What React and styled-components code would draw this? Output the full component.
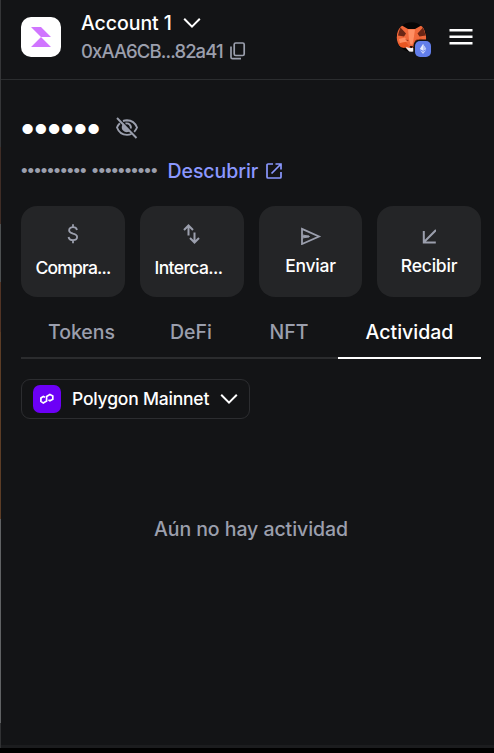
import React from "react";
import styled, { createGlobalStyle } from "styled-components";

const Global = createGlobalStyle`
  * { box-sizing: border-box; }
  body { margin: 0; background: #000; }
  button { background: none; border: 0; padding: 0; margin: 0; font: inherit; color: inherit; text-align: left; }
  svg { display: block; flex: none; }
`;

const Frame = styled.div`
  display: grid;
  grid-template-columns: 1px 1fr;
  width: 494px;
  height: 748px;
  background: #131416;
  overflow: hidden;
  font-family: Inter, "Liberation Sans", sans-serif;
`;

const Edge = styled.div`
  background: linear-gradient(
    #353638 0 147px, #402d26 147px 224px, #4d5051 224px 282px,
    #523425 282px 332px, #5c3d26 332px 519px, #606264 519px 723px, #303133 723px
  );
`;

const Wallet = styled.main`
  display: flex;
  flex-direction: column;
  border-bottom: 3px solid #1b1c1e;
`;

const Text = styled.span`
  display: block;
  white-space: nowrap;
  font-size: ${(p) => p.$size || 19.5}px;
  line-height: 24px;
  font-weight: ${(p) => p.$weight || 450};
  letter-spacing: ${(p) => p.$track ?? -0.06}px;
  color: ${(p) => p.$color || "#fff"};
`;

const Header = styled.header`
  display: flex;
  height: 80px;
  padding: 11px 21px 0 20px;
  border-bottom: 1px solid #2b2d2f;
`;

const Logo = styled.div`
  width: 40px;
  height: 40px;
  margin: 6px 20px 0 0;
  border-radius: 10px;
  background: #fff;
`;

const Account = styled.div`
  display: flex;
  flex-direction: column;
  gap: 4px;
  flex: 1;
`;

const Line = styled.div`
  display: flex;
  align-items: center;
  height: 24px;
  gap: ${(p) => p.$gap}px;
`;

const Avatar = styled.div`
  position: relative;
  width: 36px;
  height: 36px;
  margin: 10px 17px 0 0;
`;

const NetworkBadge = styled.div`
  position: absolute;
  left: 19px;
  top: 20px;
  width: 16px;
  height: 16px;
  border-radius: 5px;
  background: #627eea;
`;

const Menu = styled.button`
  height: 16px;
  margin-top: 18px;
`;

const Balance = styled.section`
  padding: 36px 20px 0;
`;

const Dots = styled.span`
  display: block;
  font-family: "Liberation Sans", sans-serif;
  white-space: pre;
  line-height: 24px;
  font-size: ${(p) => p.$size}px;
  color: ${(p) => p.$color};
`;

const Change = styled(Line)`
  margin-top: 19px;
`;

const Actions = styled.section`
  display: grid;
  grid-template-columns: 104px 104px 103px 104px;
  justify-content: space-between;
  margin: 23px 13px 0 20px;
`;

const Action = styled.button`
  display: flex;
  flex-direction: column;
  align-items: center;
  height: 91px;
  padding-top: ${(p) => p.$top}px;
  gap: ${(p) => p.$gap}px;
  border-radius: 16px;
  background: #242527;
`;

const ActionLabel = styled(Text)`
  width: 75px;
  text-align: ${(p) => (p.$clipped ? "left" : "center")};
`;

const Tabs = styled.nav`
  display: grid;
  grid-template-columns: 121px 98px 98px 143px;
  height: 62px;
  margin: 0 13px 0 20px;
`;

const Tab = styled.button`
  display: flex;
  justify-content: center;
  padding-top: 23px;
  border-bottom: 2px solid ${(p) => (p.$active ? "#fff" : "#2b2c2e")};
`;

const Network = styled.button`
  display: flex;
  align-items: center;
  width: 229px;
  height: 40px;
  margin: 20px 0 0 20px;
  padding: 0 11px;
  border: 1px solid #2c2d30;
  border-radius: 9px;
`;

const NetworkName = styled.div`
  width: 148px;
  margin-left: 11px;
`;

const Token = styled.div`
  width: 28px;
  height: 28px;
  border-radius: 7px;
  background: #6c00f6;
`;

const Empty = styled.section`
  display: flex;
  justify-content: center;
  padding-top: 98px;
  margin-left: 7px;
`;

const muted = "#9b9fad";

const Chevron = () => (
  <svg width="18" height="12" viewBox="0 0 18 12" fill="none" stroke="#fff" strokeWidth="2">
    <path d="M1.2 1.8 9 9.6l7.8-7.8" />
  </svg>
);

const Fox = () => (
  <svg width="36" height="36" viewBox="0 0 36 36">
    <defs>
      <clipPath id="avatar">
        <circle cx="15.5" cy="16" r="14.8" />
      </clipPath>
    </defs>
    <g clipPath="url(#avatar)">
      <path fill="#050505" d="M0 0h31v32H0z" />
      <path fill="#f0683a" d="M5 4l7 4h7l8-4.500 2 7.500 2 9-6 5h-7l-2 4h-4l-3-3-6-1-4-6 2-5-1-4z" />
      <path fill="#6b2615" d="M4.500 6.500l5.500 6-2 3-6-1 1-4zM27 6.500l-5.500 6 2 3 6-1-1-4z" />
      <path fill="#ff8f63" d="M12 8.500h7l-1.500 10-1 5h-2l-1.500-5zM3 18l6-1.500 2.500 4L4 22z" />
      <path fill="#e85622" d="M2 22.500l8-1.500 3 4-5 2-4-1zM18 20l7-3 4 4-8 4z" />
      <path fill="#9b3519" d="M9 18.500l3.500.500-.5 1.200zM18.500 19.500l3.500-1.500-1.500 2z" />
      <path fill="#f3eeee" d="M9.500 26l4 1h4v4h-4z" />
      <path fill="#2a110d" d="M13.500 25h3.500l-1 2h-1.500z" />
    </g>
    <rect x="17.500" y="18.500" width="19" height="19" rx="6" fill="#131416" />
  </svg>
);

const DollarIcon = () => (
  <svg width="12" height="20" viewBox="0 0 12 20" fill="none" stroke={muted} strokeWidth="1.8">
    <path d="M6 .2v3M6 16.2v3M10 6C9.500 4 8.200 3.200 6 3.200c-2.200 0-3.900 1-3.900 3 0 2.200 1.900 2.900 4 3.500 2.400.6 4 1.300 4 3.400 0 2-1.700 3.100-4.100 3.100-2.500 0-4-1-4.500-3.200" />
  </svg>
);

const SwapIcon = () => (
  <svg width="18" height="20" viewBox="0 0 18 20" fill="none" stroke={muted} strokeWidth="2">
    <path d="M5.500 11.500V1.500M1 6l4.500-4.500L10 6M11.500 8.500v10M7 14l4.500 4.500L16 14" />
  </svg>
);

const SendIcon = () => (
  <svg width="22" height="18" viewBox="0 0 22 18" fill="none" stroke={muted} strokeWidth="1.8">
    <path d="M2 1.900 19 9.500 2 17zM2.500 9.500H9" />
    <path d="M2 7.800 9.500 9.500 2 11.200" strokeWidth="1" />
  </svg>
);

const ReceiveIcon = () => (
  <svg width="14" height="18" viewBox="0 0 14 18" fill="none" stroke={muted} strokeWidth="2">
    <path d="M14 3 1.800 15.200M1.800 4V15.500h12" />
  </svg>
);

const actions = [
  { label: "Compra...", Icon: DollarIcon, top: 18, gap: 12, track: -0.8, clipped: true },
  { label: "Interca...", Icon: SwapIcon, top: 18, gap: 12, track: -0.6, clipped: true },
  { label: "Enviar", Icon: SendIcon, top: 21, gap: 9, track: -0.25 },
  { label: "Recibir", Icon: ReceiveIcon, top: 21, gap: 9, track: -0.2 },
];

const tabs = [
  { label: "Tokens" },
  { label: "DeFi" },
  { label: "NFT" },
  { label: "Actividad", active: true },
];

export default function App() {
  return (
    <Frame>
      <Global />
      <Edge />
      <Wallet>
        <Header>
          <Logo>
            <svg width="40" height="40" viewBox="0 0 40 40" fill="#d075ff">
              <path d="M10 10h10l10 10H20zM20 20l10 10H10z" />
            </svg>
          </Logo>
          <Account>
            <Line $gap={11}>
              <Text $weight={500} $track={-0.05}>Account 1</Text>
              <Chevron />
            </Line>
            <Line $gap={7}>
              <Text $color={muted} $size={18.5} $track={-0.91}>0xAA6CB...82a41</Text>
              <svg width="16" height="18" viewBox="0 0 16 18" fill="none" stroke={muted} strokeWidth="1.700">
                <rect x="4.200" y="1" width="10" height="12.500" rx="1.500" />
                <path d="M1 4.500V15.200a1.500 1.500 0 0 0 1.500 1.500H11" />
              </svg>
            </Line>
          </Account>
          <Avatar>
            <Fox />
            <NetworkBadge>
              <svg width="16" height="16" viewBox="0 0 16 16">
                <path d="m8 3-3.200 5L8 9.800 11.200 8z" fill="#e4e9fc" />
                <path d="M8 3v6.800L11.200 8z" fill="#b8c5f6" />
                <path d="m4.800 9 3.200 4 3.200-4L8 10.800z" fill="#c8d2f8" />
              </svg>
            </NetworkBadge>
          </Avatar>
          <Menu>
            <svg width="24" height="16" viewBox="0 0 24 16" fill="#fff">
              <path d="M.5 0h23v2.600H.5zM.5 6.500h23v2.600H.5zM.5 13h23v2.600H.5z" />
            </svg>
          </Menu>
        </Header>

        <Balance>
          <Line $gap={15}>
            <Dots $size={37.7} $color="#fff">••••••</Dots>
            <svg width="24" height="22" viewBox="0 0 24 22" fill="none" stroke={muted} strokeWidth="1.900">
              <path d="M8 4a12 12 0 0 1 4-.8c4.600 0 8.200 2.700 10 7.300-.7 1.700-1.600 3.100-2.800 4.300M16.500 17c-1.400.6-2.900.9-4.500.9-4.600 0-8.300-2.700-10-7.400.7-1.700 1.600-3.100 2.900-4.300" />
              <path d="M10.500 6.500c3.300-.8 5.800 1.700 5.400 5" />
              <path d="M8.200 8c-1.700 4 1.400 7.300 5.500 5.900z" fill={muted} />
              <path d="m2 1 19.500 20" />
            </svg>
          </Line>
          <Change $gap={10}>
            <Dots $size={18.75} $color={muted}>•••••••••• ••••••••••</Dots>
            <Line $gap={8}>
              <Text $color="#8b98ff">Descubrir</Text>
              <svg width="16" height="16" viewBox="0 0 16 16" fill="none" stroke="#8b98ff" strokeWidth="1.700">
                <path d="M7 1H2a1 1 0 0 0-1 1v12a1 1 0 0 0 1 1h12a1 1 0 0 0 1-1V9M9.500 1H15v5.500M15 1 5.500 10.500" />
              </svg>
            </Line>
          </Change>
        </Balance>

        <Actions>
          {actions.map(({ label, Icon, top, gap, track, clipped }) => (
            <Action key={label} $top={top} $gap={gap}>
              <Icon />
              <ActionLabel $weight={500} $size={17.5} $track={track} $clipped={clipped}>{label}</ActionLabel>
            </Action>
          ))}
        </Actions>

        <Tabs>
          {tabs.map(({ label, active }) => (
            <Tab key={label} $active={active}>
              <Text $weight={active ? 500 : 450} $color={active ? "#fff" : muted} $track={0}>{label}</Text>
            </Tab>
          ))}
        </Tabs>

        <Network>
          <Token>
            <svg width="28" height="28" viewBox="0 0 28 28" fill="none" stroke="#fff" strokeWidth="1.700">
              <path d="m12 12.200-1.700-.7L7.900 13v3.400l2.400 1.500 3.300-1.900v-4.600l3.300-1.900 2.900 1.500v3.300l-2.900 1.500-1.500-.7" />
            </svg>
          </Token>
          <NetworkName>
            <Text $weight={500} $size={17.5} $track={-0.2}>Polygon Mainnet</Text>
          </NetworkName>
          <Chevron />
        </Network>

        <Empty>
          <Text $color={muted}>Aún no hay actividad</Text>
        </Empty>
      </Wallet>
    </Frame>
  );
}
